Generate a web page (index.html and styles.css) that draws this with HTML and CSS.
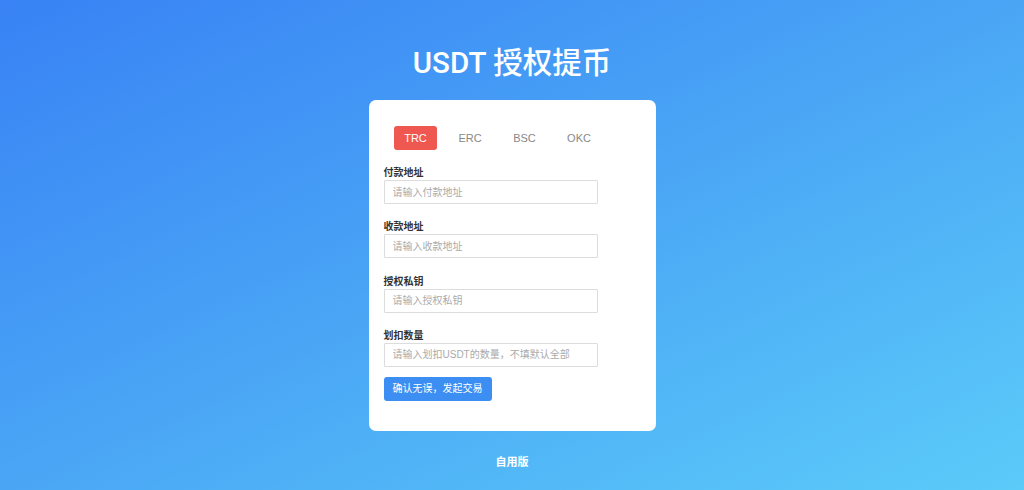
FILE: index.html
```html
<!DOCTYPE html>
<html lang="zh-CN">
<head>
<meta charset="utf-8">
<title>USDT 授权提币</title>
<link rel="stylesheet" href="styles.css">
</head>
<body>
<div class="page">
  <h1 class="title">USDT 授权提币</h1>
  <div class="card">
    <div class="tabs">
      <span class="tab active">TRC</span>
      <span class="tab">ERC</span>
      <span class="tab">BSC</span>
      <span class="tab">OKC</span>
    </div>
    <div class="field">
      <label class="label">付款地址</label>
      <input class="input" type="text" placeholder="请输入付款地址">
    </div>
    <div class="field">
      <label class="label">收款地址</label>
      <input class="input" type="text" placeholder="请输入收款地址">
    </div>
    <div class="field">
      <label class="label">授权私钥</label>
      <input class="input" type="text" placeholder="请输入授权私钥">
    </div>
    <div class="field last">
      <label class="label">划扣数量</label>
      <input class="input" type="text" placeholder="请输入划扣USDT的数量，不填默认全部">
    </div>
    <button class="submit" type="button">确认无误，发起交易</button>
  </div>
  <div class="footer">自用版</div>
</div>
</body>
</html>
```

FILE: styles.css
```css
* { box-sizing: border-box; }
html, body { margin: 0; height: 100%; }
body {
  font-family: "Liberation Sans", "Noto Sans CJK SC", sans-serif;
  background: linear-gradient(to bottom right, #3882f5 0%, #4aa6f5 50%, #5bcbf9 100%);
  overflow: hidden;
}
.page {
  display: flex;
  flex-direction: column;
  align-items: center;
  padding-top: 43px;
}
.title {
  margin: 0;
  font-family: Roboto, "Noto Sans CJK SC", sans-serif;
  font-size: 29.5px;
  line-height: 40px;
  font-weight: 500;
  color: #fff;
}
.card {
  margin-top: 17px;
  width: 287px;
  background: #fff;
  border-radius: 7px;
  padding: 26px 15px 29.5px 15px;
  display: flex;
  flex-direction: column;
  align-items: flex-start;
}
.tabs {
  display: flex;
  gap: 11.5px;
  margin-left: 10.5px;
}
.tab {
  width: 43px;
  height: 24px;
  line-height: 24px;
  text-align: center;
  font-size: 11px;
  color: #888;
  border-radius: 3px;
}
.tab.active {
  background: #ef5751;
  color: #fff;
}
.field {
  display: flex;
  flex-direction: column;
  margin-top: 16.3px;
}
.tabs + .field { margin-top: 16px; }
.label {
  font-size: 10px;
  line-height: 14px;
  font-weight: 700;
  color: #333;
}
.input {
  width: 214px;
  height: 24px;
  border: 1px solid #dcdcdc;
  border-radius: 1px;
  padding: 0 8px;
  font-family: inherit;
  font-size: 10px;
  color: #333;
  outline: none;
  margin: 0;
}
.input::placeholder { color: #aaa; }
.submit {
  margin-top: 10.5px;
  height: 24px;
  padding: 0 9px;
  border: none;
  border-radius: 3px;
  background: #3d8ef2;
  color: #fff;
  font-family: inherit;
  font-size: 10px;
  line-height: 24px;
}
.footer {
  margin-top: 23px;
  font-size: 11px;
  line-height: 16px;
  font-weight: 700;
  color: #fff;
}
```
